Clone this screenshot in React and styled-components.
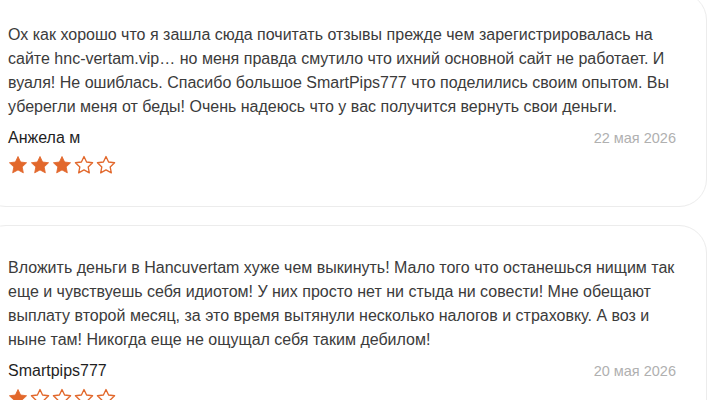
import React from 'react';
import styled, { createGlobalStyle } from 'styled-components';

const GlobalStyle = createGlobalStyle`
  html, body {
    margin: 0;
    padding: 0;
    background: #fff;
    overflow: hidden;
  }
  body {
    font-family: "Liberation Sans", Arial, sans-serif;
  }
`;

const List = styled.div`
  display: flex;
  flex-direction: column;
  gap: 18px;
  margin: -8px 3px 0 -22px;
`;

const Card = styled.div`
  border: 1px solid #ececec;
  border-radius: 28px;
  padding: 30px 30px 31px 29px;
  background: #fff;
`;

const Text = styled.p`
  margin: 0;
  font-size: 16px;
  line-height: 24px;
  color: #3b3b3b;
`;

const Meta = styled.div`
  display: flex;
  justify-content: space-between;
  align-items: baseline;
  margin-top: 7px;
`;

const Author = styled.span`
  font-size: 16px;
  line-height: 24px;
  color: #1f1f1f;
`;

const DateText = styled.span`
  font-size: 14.5px;
  color: #b0b0b0;
`;

const Stars = styled.div`
  display: flex;
  gap: 2px;
  margin-top: 5px;
`;

const StarIcon = ({ filled }) => (
  <svg width="20" height="20" viewBox="0 0 24 24">
    <path
      d="M12 1.8l3.1 6.6 7.2.9-5.3 5 1.4 7.1L12 17.9l-6.4 3.5 1.4-7.1-5.3-5 7.2-.9z"
      fill={filled ? '#e2682c' : '#fff'}
      stroke="#e2682c"
      strokeWidth={filled ? 1 : 1.6}
      strokeLinejoin="round"
    />
  </svg>
);

const Rating = ({ value }) => (
  <Stars>
    {[1, 2, 3, 4, 5].map(i => <StarIcon key={i} filled={i <= value} />)}
  </Stars>
);

const reviews = [
  {
    text: 'Ох как хорошо что я зашла сюда почитать отзывы прежде чем зарегистрировалась на сайте hnc-vertam.vip… но меня правда смутило что ихний основной сайт не работает. И вуаля! Не ошиблась. Спасибо большое SmartPips777 что поделились своим опытом. Вы уберегли меня от беды! Очень надеюсь что у вас получится вернуть свои деньги.',
    author: 'Анжела м',
    date: '22 мая 2026',
    rating: 3
  },
  {
    text: 'Вложить деньги в Hancuvertam хуже чем выкинуть! Мало того что останешься нищим так еще и чувствуешь себя идиотом! У них просто нет ни стыда ни совести! Мне обещают выплату второй месяц, за это время вытянули несколько налогов и страховку. А воз и ныне там! Никогда еще не ощущал себя таким дебилом!',
    author: 'Smartpips777',
    date: '20 мая 2026',
    rating: 1
  }
];

const App = () => {
  return (
    <React.Fragment>
      <GlobalStyle />
      <List>
        {reviews.map(r => (
          <Card key={r.author}>
            <Text>{r.text}</Text>
            <Meta>
              <Author>{r.author}</Author>
              <DateText>{r.date}</DateText>
            </Meta>
            <Rating value={r.rating} />
          </Card>
        ))}
      </List>
    </React.Fragment>
  );
};

export default App;
